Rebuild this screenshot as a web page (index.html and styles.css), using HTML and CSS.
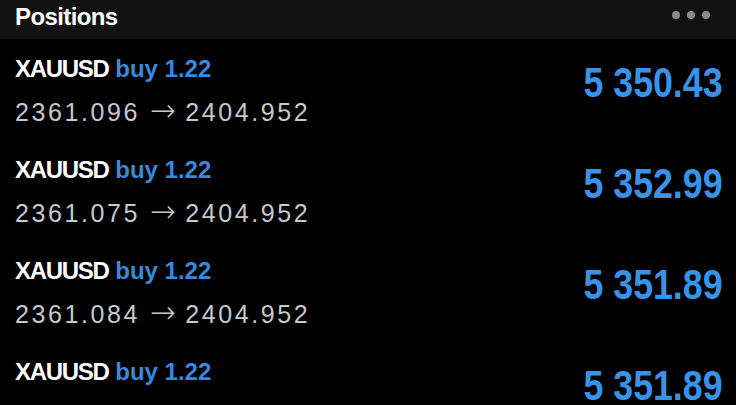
FILE: index.html
```html
<!DOCTYPE html>
<html>
<head>
  <title>Positions</title>
  <meta charset="UTF-8">
  <meta name="viewport" content="width=device-width, initial-scale=1.0">
  <link rel="stylesheet" href="styles.css">
</head>
<body>
  <div class="header">
    <h1>Positions</h1>
    <div class="more">
      <span></span><span></span><span></span>
    </div>
  </div>

  <div class="position">
    <div class="info">
      <div class="title"><span class="symbol">XAUUSD</span> <span class="side">buy 1.22</span></div>
      <div class="prices">2361.096 <span class="arrow">→</span> 2404.952</div>
    </div>
    <div class="profit">5 350.43</div>
  </div>

  <div class="position">
    <div class="info">
      <div class="title"><span class="symbol">XAUUSD</span> <span class="side">buy 1.22</span></div>
      <div class="prices">2361.075 <span class="arrow">→</span> 2404.952</div>
    </div>
    <div class="profit">5 352.99</div>
  </div>

  <div class="position">
    <div class="info">
      <div class="title"><span class="symbol">XAUUSD</span> <span class="side">buy 1.22</span></div>
      <div class="prices">2361.084 <span class="arrow">→</span> 2404.952</div>
    </div>
    <div class="profit">5 351.89</div>
  </div>

  <div class="position">
    <div class="info">
      <div class="title"><span class="symbol">XAUUSD</span> <span class="side">buy 1.22</span></div>
      <div class="prices">2361.084 <span class="arrow">→</span> 2404.952</div>
    </div>
    <div class="profit">5 351.89</div>
  </div>
</body>
</html>
```

FILE: styles.css
```css
body {
  margin: 0;
  height: 405px;
  background-color: #000;
  color: #fff;
  font-family: 'Liberation Sans', Arial, sans-serif;
  overflow: hidden;
}

.header {
  height: 39px;
  box-sizing: border-box;
  padding: 2px 26px 0 15px;
  background-color: #111;
  display: flex;
  justify-content: space-between;
  align-items: flex-start;
}

h1 {
  margin: 0;
  font-size: 24px;
  line-height: 30px;
  font-weight: bold;
  letter-spacing: -0.6px;
}

.more {
  display: flex;
  gap: 7px;
  margin-top: 9px;
}

.more span {
  width: 8px;
  height: 8px;
  border-radius: 50%;
  background-color: #8a8a8a;
}

.position {
  height: 101px;
  padding: 0 14px 0 15px;
  display: flex;
  justify-content: space-between;
  align-items: flex-start;
}

.info {
  padding-top: 16px;
}

.title {
  font-size: 24px;
  line-height: 28px;
  font-weight: bold;
}

.symbol {
  letter-spacing: -1.3px;
}

.side {
  color: #3a88dc;
}

.prices {
  margin-top: 12px;
  font-size: 25px;
  line-height: 30px;
  color: #c8c8c8;
  letter-spacing: 2.6px;
}

.arrow {
  font-family: 'DejaVu Sans', sans-serif;
  font-size: 31px;
  font-weight: 200;
  letter-spacing: 0;
}

.profit {
  margin-top: 20px;
  font-size: 42px;
  line-height: 48px;
  font-weight: bold;
  color: #3a92e8;
  transform: scaleX(0.85);
  transform-origin: right center;
}
```
